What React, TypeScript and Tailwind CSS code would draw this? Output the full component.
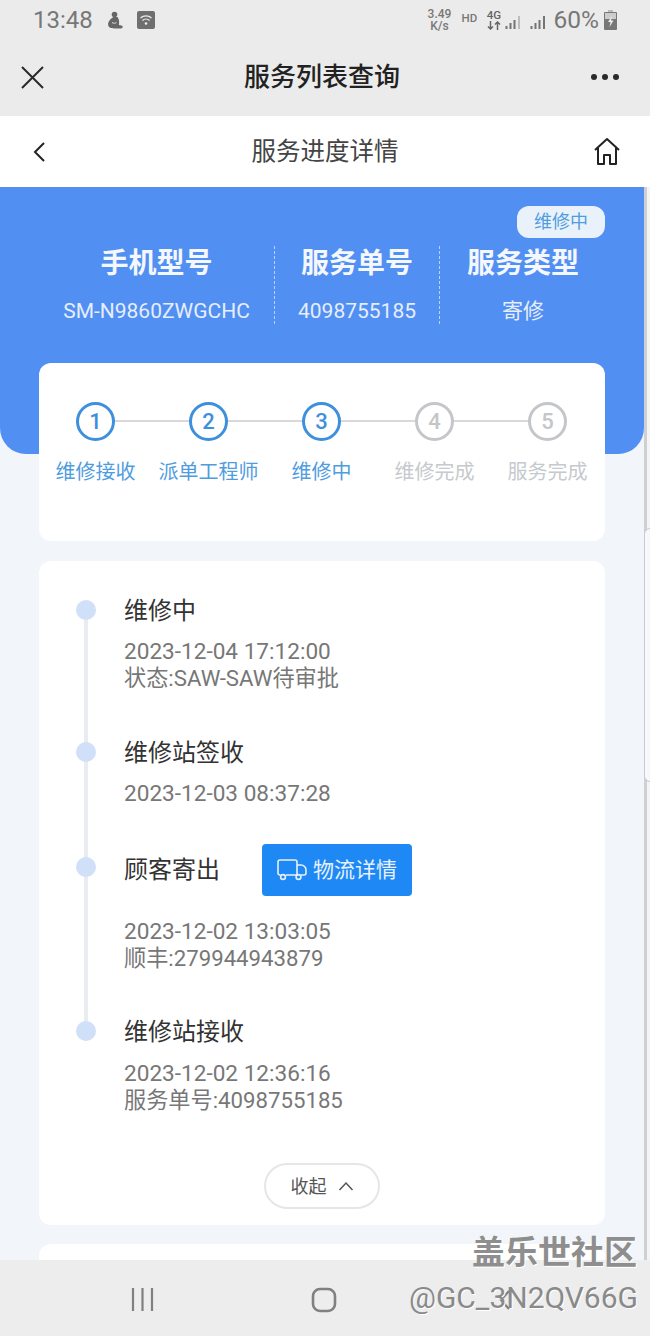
import React from "react";

const font = { fontFamily: '"Roboto","Noto Sans CJK SC",sans-serif' };

function Signal({ fade }: { fade?: boolean }) {
  return (
    <svg className="mt-[3px]" width="17" height="14" viewBox="0 0 17 14" fill="#747474">
      <rect x="0.5" y="11" width="2" height="3" />
      <rect x="4.5" y="8" width="2" height="6" />
      <rect x="8.5" y="5" width="2" height="9" />
      <rect x="13" y="1" width="2" height="13" fill={fade ? "#bdbdbd" : "#747474"} />
    </svg>
  );
}

function StatusBar() {
  return (
    <div className="h-[40px] flex items-center pl-[33px] pr-[33px] text-[#777]">
      <span className="text-[24px] leading-none">13:48</span>
      <svg className="ml-[14px]" width="17" height="18" viewBox="0 0 17 18" fill="#666">
        <circle cx="7.5" cy="3.5" r="2.8" />
        <path d="M6.5 6C3 8 .8 11 1.2 14c.4 2.6 3 3.4 5.8 3.4h6.5c2.2 0 2.8-1.7 1.6-2.7-1-.8-2.6.1-3.2-1 .6-2.6.2-5.8-1.4-7.7z" />
        <path d="M5 11.5c1.5 1 3 1 4.5 0" stroke="#ddd" strokeWidth="1" fill="none" />
      </svg>
      <svg className="ml-[13px]" width="18" height="18" viewBox="0 0 18 18">
        <rect width="18" height="18" rx="2" fill="#6f6f6f" />
        <path d="M3.5 7a8 8 0 0 1 11 0M5.5 9.5a5 5 0 0 1 7 0" stroke="#eee" strokeWidth="1.3" fill="none" />
        <circle cx="9" cy="12.5" r="1.3" fill="#eee" />
      </svg>
      <div className="ml-auto flex items-center">
        <div className="w-[26px] text-[12px] leading-[12px] text-center font-medium">
          3.49
          <br />
          K/s
        </div>
        <span className="ml-[9px] w-[16px] text-[11.5px] leading-none font-medium mt-[-3px]">HD</span>
        <div className="ml-[9px] w-[15px] flex flex-col items-center text-[#666]">
          <span className="text-[11.5px] leading-[10px] font-medium">4G</span>
          <svg className="mt-[1px]" width="14" height="9" viewBox="0 0 14 9" stroke="#666" strokeWidth="1.5" fill="none">
            <path d="M3.5 0v8M1 5.5l2.5 2.500L6 5.5M10.500 9V1M8 3.500 10.500 1 13 3.500" />
          </svg>
        </div>
        <span className="ml-[3px]"><Signal fade /></span>
        <span className="ml-[8px]"><Signal /></span>
        <span className="ml-[7px] text-[24.5px] leading-none">60%</span>
        <svg className="ml-[5px]" width="13" height="20" viewBox="0 0 13 20">
          <rect x="4" y="0" width="5" height="2" fill="#bbb" />
          <rect x="0" y="2" width="13" height="18" rx="1" fill="#777" />
          <rect x="1" y="3" width="11" height="6" fill="#ccc" />
          <path d="M8 6 4 12h2.5l-1 5L9.5 10.5H7z" fill="#eee" />
        </svg>
      </div>
    </div>
  );
}

function WeChatBar() {
  return (
    <div className="h-[76px] flex items-center justify-between pl-[20px] pr-[31px] pb-[2px]">
      <svg width="25" height="25" viewBox="0 0 25 25" stroke="#2a2a2a" strokeWidth="2" fill="none">
        <path d="M2 2 23 23M23 2 2 23" />
      </svg>
      <span className="text-[26px] leading-none font-medium text-[#222] absolute left-0 right-[6px] text-center">服务列表查询</span>
      <div className="flex gap-[5px]">
        <span className="w-[6px] h-[6px] rounded-full bg-[#2a2a2a]" />
        <span className="w-[6px] h-[6px] rounded-full bg-[#2a2a2a]" />
        <span className="w-[6px] h-[6px] rounded-full bg-[#2a2a2a]" />
      </div>
    </div>
  );
}

function SubHeader() {
  return (
    <div className="relative h-[71px] bg-white flex items-center justify-between pl-[32px] pr-[29px]">
      <svg width="14" height="24" viewBox="0 0 14 24" stroke="#222" strokeWidth="2" fill="none">
        <path d="M12 3 3 12l9 9" />
      </svg>
      <span className="absolute left-0 right-0 pt-[2px] text-center text-[24.5px] leading-none text-[#444]">服务进度详情</span>
      <svg width="28" height="30" viewBox="0 0 28 30" stroke="#222" strokeWidth="2" fill="none" strokeLinejoin="round">
        <path d="M2 13 14 2l12 11M5 11v16h6v-9h6v9h6V11" />
      </svg>
    </div>
  );
}

function InfoCol({ title, value, className }: { title: string; value: string; className: string }) {
  return (
    <div className={`flex flex-col items-center mt-[2px] ${className}`}>
      <div className="text-[28px] leading-[32px] font-bold text-[#f4f7fb]">{title}</div>
      <div className="mt-[18px] text-[21px] leading-[26px] text-[#e6eefb]">{value}</div>
    </div>
  );
}

const steps = [
  { n: 1, label: "维修接收", on: true },
  { n: 2, label: "派单工程师", on: true },
  { n: 3, label: "维修中", on: true },
  { n: 4, label: "维修完成", on: false },
  { n: 5, label: "服务完成", on: false },
];

function Stepper() {
  return (
    <div className="relative z-10 mx-[39px] mt-[-91px] h-[178px] bg-white rounded-[12px] pt-[39px]">
      <div className="relative grid grid-cols-[113px_113px_113px_113px_113px]">
        <div className="absolute left-[57px] w-[452px] top-[18px] h-[2px] bg-[#d9d9d9]" />
        {steps.map((s) => (
          <div key={s.n} className="relative flex flex-col items-center">
            <div
              className={`w-[39px] h-[39px] rounded-full border-[3px] bg-white flex items-center justify-center text-[22px] font-medium leading-none ${
                s.on ? "border-[#3f90dc] text-[#3f90dc]" : "border-[#c4c6c9] text-[#c4c6c9]"
              }`}
            >
              {s.n}
            </div>
            <div className={`mt-[18px] text-[20px] leading-[26px] whitespace-nowrap ${s.on ? "text-[#4f9cdf]" : "text-[#c6c9cd]"}`}>
              {s.label}
            </div>
          </div>
        ))}
      </div>
    </div>
  );
}

function TimelineItem({
  title,
  date,
  note,
  extra,
  height,
  dot = "top-[4px]",
  gap = "mt-[12px]",
}: {
  title: string;
  date: string;
  note?: string;
  extra?: React.ReactNode;
  height: string;
  dot?: string;
  gap?: string;
}) {
  return (
    <div className={`relative ${height}`}>
      <span className={`absolute left-[-48px] ${dot} w-[20px] h-[20px] rounded-full bg-[#cfe0f8]`} />
      <div className="flex items-center text-[24px] leading-[30px] text-[#333]">
        {title}
        {extra}
      </div>
      <div className={`${gap} leading-[27px] text-[#777]`}>
        <div className="text-[22.6px]">{date}</div>
        {note && <div className="text-[22.2px]">{note}</div>}
      </div>
    </div>
  );
}

function Timeline() {
  return (
    <div className="relative mx-[39px] mt-[20px] h-[664px] bg-white rounded-[12px] pl-[85px] pt-[35px]">
      <div className="absolute left-[45px] top-[49px] w-[4px] h-[422px] bg-[#e9ecf1]" />
      <TimelineItem height="h-[142px]" title="维修中" date="2023-12-04 17:12:00" note="状态:SAW-SAW待审批" />
      <TimelineItem height="h-[117px]" title="维修站签收" date="2023-12-03 08:37:28" />
      <TimelineItem
        height="h-[162px]"
        dot="top-[2px]"
        gap="mt-[33px]"
        title="顾客寄出"
        date="2023-12-02 13:03:05"
        note="顺丰:279944943879"
        extra={
          <span className="ml-[42px] my-[-11px] w-[150px] h-[52px] rounded-[4px] bg-[#1e88f5] flex items-center justify-center text-[21px] text-[#e6f1fd]">
            <svg className="mr-[6px]" width="30" height="22" viewBox="0 0 30 22" stroke="#e6f1fd" strokeWidth="1.6" fill="none">
              <path d="M3.5 16H3a2 2 0 0 1-2-2V3a2 2 0 0 1 2-2h15a2 2 0 0 1 2 2v13H9" />
              <path d="M20 6h4a5 5 0 0 1 5 5v3a2 2 0 0 1-2 2h-3" />
              <circle cx="6" cy="18" r="2.4" />
              <circle cx="21.5" cy="18" r="2.4" />
            </svg>
            物流详情
          </span>
        }
      />
      <TimelineItem height="h-[120px]" gap="mt-[13px]" title="维修站接收" date="2023-12-02 12:36:16" note="服务单号:4098755185" />
      <div className="flex justify-center ml-[-85px] mt-[26px]">
        <div className="w-[116px] h-[46px] rounded-full border-2 border-[#e6e6e6] flex items-center justify-center text-[18px] text-[#555]">
          收起
          <svg className="ml-[11px]" width="16" height="10" viewBox="0 0 16 10" stroke="#555" strokeWidth="1.5" fill="none">
            <path d="M1.5 9 8 2l6.5 7" />
          </svg>
        </div>
      </div>
    </div>
  );
}

export default function App() {
  return (
    <div className="relative w-[650px] h-[1336px] overflow-hidden bg-[#f2f5f9]" style={font}>
      <div className="relative bg-[#ebebeb]">
        <StatusBar />
        <WeChatBar />
      </div>
      <SubHeader />
      <div className="w-[644px]">
        <div className="h-[267px] bg-[#528ff2] rounded-b-[26px] relative">
          <div className="absolute right-[39px] top-[19px] w-[88px] h-[32px] rounded-[12px] bg-[#e9f2fb] text-[#4f9cdf] text-[18px] leading-[32px] text-center">
            维修中
          </div>
          <div className="flex pt-[59px] pl-[39px]">
            <InfoCol className="w-[235px]" title="手机型号" value="SM-N9860ZWGCHC" />
            <div className="w-0 h-[78px] border-l border-dashed border-[#bcd2f6]" />
            <InfoCol className="w-[164px]" title="服务单号" value="4098755185" />
            <div className="w-0 h-[78px] border-l border-dashed border-[#bcd2f6]" />
            <InfoCol className="w-[166px]" title="服务类型" value="寄修" />
          </div>
        </div>
        <Stepper />
        <Timeline />
        <div className="mx-[39px] mt-[19px] h-[60px] bg-white rounded-[12px]" />
      </div>

      <div className="absolute right-0 top-[187px] bottom-0 w-[6px] border-l-[3px] border-[#cfd0d2] bg-[#f4f4f4]" />
      <div className="absolute right-0 top-[528px] w-[6px] h-[254px] rounded-l-[6px] border border-r-0 border-[#c8ccd2] bg-[#f7f8fa]" />

      <div className="absolute left-0 right-0 top-[1260px] h-[76px] bg-[#ededed]">
        <svg className="absolute left-[131px] top-[27px]" width="24" height="25" viewBox="0 0 24 25" stroke="#808080" strokeWidth="2.2">
          <path d="M2 1v23M11.5 1v23M21 1v23" />
        </svg>
        <svg className="absolute left-[311px] top-[27px]" width="26" height="26" viewBox="0 0 26 26" stroke="#808080" strokeWidth="2.6" fill="none">
          <rect x="2" y="2" width="22" height="22" rx="7" />
        </svg>
        <svg className="absolute left-[499px] top-[29px]" width="12" height="22" viewBox="0 0 12 22" stroke="#808080" strokeWidth="2.2" fill="none">
          <path d="M10 2 2 11l8 9" />
        </svg>
      </div>

      <div className="absolute right-[13px] top-[1233px] text-[33px] leading-[40px] font-bold text-[#8e8e8e] [text-shadow:1px_1px_0_#fff]">盖乐世社区</div>
      <div className="absolute right-[12px] top-[1280px] text-[30px] leading-[36px] text-[#8a8a8a] [text-shadow:1px_1px_0_#fff]">@GC_3N2QV66G</div>
    </div>
  );
}
